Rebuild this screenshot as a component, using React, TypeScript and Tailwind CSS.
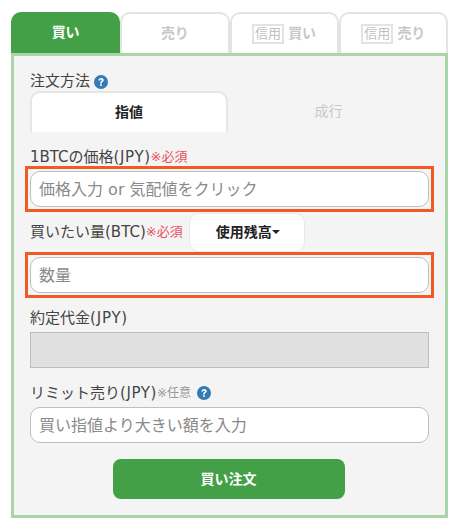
const font = { fontFamily: '"DejaVu Sans","Noto Sans CJK JP",sans-serif' };

function Help({ className }: { className: string }) {
  return (
    <svg viewBox="0 0 14 14" className={`w-[14px] h-[14px] shrink-0 ${className}`}>
      <circle cx="7" cy="7" r="7" fill="#337ab7" />
      <path d="M4.4 5.4C4.5 3.9 5.6 3 7.1 3c1.5 0 2.6.9 2.6 2.1 0 1-.6 1.5-1.2 1.9-.5.3-.7.6-.7 1.1v.3H6.1v-.5c0-.8.3-1.3 1-1.7.5-.3.7-.6.7-1 0-.4-.4-.7-.8-.7-.6 0-1 .4-1 1H4.4z" fill="#fff" />
      <rect x="6.1" y="9.2" width="1.7" height="1.7" fill="#fff" />
    </svg>
  );
}

function Tab({ label, active, credit }: { label: string; active?: boolean; credit?: boolean }) {
  return (
    <div
      className={`h-[41px] flex items-center justify-center rounded-t-[10px] text-[14px] font-bold ${
        active ? "bg-[#43a047] text-white" : "bg-white text-[#c8c8c8] border-2 border-b-0 border-[#e3e3e3]"
      }`}
    >
      {credit && (
        <span className="border-2 border-[#e3e3e3] font-normal text-[13px] leading-[16px] px-[1px] mr-[4px] mt-[1px] text-[#c0c0c0]">
          信用
        </span>
      )}
      {label}
    </div>
  );
}

function Field({ placeholder }: { placeholder: string }) {
  return (
    <input
      readOnly
      placeholder={placeholder}
      className="block w-full h-[36px] bg-white border border-[#bfbfbf] rounded-[10px] px-[8px] text-[16px] text-[#555] placeholder:text-[#8a8a8a] outline-none"
      style={font}
    />
  );
}

function Highlight({ placeholder }: { placeholder: string }) {
  return (
    <div className="-mx-[5px] border-[3px] border-[#f15a22] px-[2px] py-[2px] h-[46px]">
      <Field placeholder={placeholder} />
    </div>
  );
}

export default function App() {
  return (
    <div className="w-[460px] h-[530px] bg-white pt-[12px] pl-[11px] text-[#444]" style={font}>
      <div className="w-[437px]">
        <div className="grid grid-cols-4">
          <Tab label="買い" active />
          <Tab label="売り" />
          <Tab label="買い" credit />
          <Tab label="売り" credit />
        </div>
        <div className="h-[465px] bg-[#f4f4f4] border-[3px] border-[#a9d5a9] pt-[14px] px-[16px]">
          <div className="flex items-end h-[21px] text-[15px] leading-[20px]">
            注文方法
            <Help className="ml-[4px] mb-[2px]" />
          </div>
          <div className="flex h-[41px]">
            <div className="w-[198px] bg-white border-2 border-b-0 border-[#e6e6e6] rounded-t-[10px] flex items-center justify-center text-[14px] font-bold text-[#222]">
              指値
            </div>
            <div className="flex-1 flex items-center justify-center text-[14px] text-[#c8c8c8]">成行</div>
          </div>
          <div className="flex items-end h-[34px] text-[15px] leading-[18px]">
            1BTCの価格<span className="tracking-[0.6px]">(JPY)</span>
            <span className="text-[13px] text-[#e8505a]">※必須</span>
          </div>
          <Highlight placeholder="価格入力 or 気配値をクリック" />
          <div className="flex items-center h-[40px] text-[15px]">
            買いたい量(BTC)
            <span className="text-[13px] text-[#e8505a]">※必須</span>
            <div className="ml-[6px] w-[116px] h-[39px] pl-[2px] bg-white border border-[#e9e9e9] rounded-[10px] flex items-center justify-center font-bold text-[#222] text-[14px]">
              使用残高
              <span className="w-0 h-0 border-x-[4px] border-x-transparent border-t-[4px] border-t-[#222]" />
            </div>
          </div>
          <Highlight placeholder="数量" />
          <div className="flex items-end h-[34px] text-[15px] leading-[28px]">
            約定代金<span className="tracking-[0.8px]">(JPY)</span>
          </div>
          <div className="h-[36px] bg-[#e0e0e0] border border-[#bdbdbd]" />
          <div className="flex items-end h-[39px] text-[15px] leading-[28px]">
            リミット売り<span className="tracking-[0.6px]">(JPY)</span>
            <span className="text-[12px] text-[#999]">※任意</span>
            <Help className="ml-[6px] mb-[7px]" />
          </div>
          <Field placeholder="買い指値より大きい額を入力" />
          <div className="flex justify-center mt-[16px] pr-[2px]">
            <button className="w-[232px] h-[40px] bg-[#43a047] text-white font-bold text-[14px] rounded-[8px]" style={font}>
              買い注文
            </button>
          </div>
        </div>
      </div>
    </div>
  );
}
